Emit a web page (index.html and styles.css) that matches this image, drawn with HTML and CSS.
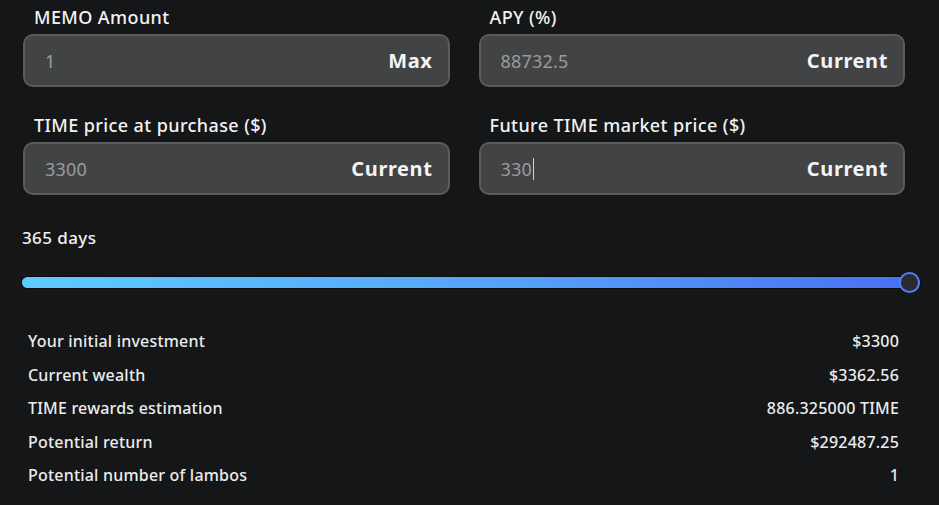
FILE: index.html
```html
<!DOCTYPE html>
<html lang="en">
<head>
    <meta charset="UTF-8">
    <title>Calculator</title>
    <link rel="stylesheet" href="styles.css">
</head>
<body>
    <div class="calc">
        <div class="fields">
            <div class="field">
                <label>MEMO Amount</label>
                <div class="input-box">
                    <span class="value">1</span>
                    <span class="action">Max</span>
                </div>
            </div>
            <div class="field">
                <label>APY (%)</label>
                <div class="input-box">
                    <span class="value">88732.5</span>
                    <span class="action">Current</span>
                </div>
            </div>
            <div class="field">
                <label>TIME price at purchase ($)</label>
                <div class="input-box">
                    <span class="value">3300</span>
                    <span class="action">Current</span>
                </div>
            </div>
            <div class="field">
                <label>Future TIME market price ($)</label>
                <div class="input-box">
                    <span class="value">330<span class="caret"></span></span>
                    <span class="action">Current</span>
                </div>
            </div>
        </div>

        <div class="days">365 days</div>
        <div class="slider">
            <div class="track"></div>
            <div class="thumb"></div>
        </div>

        <div class="results">
            <div class="row"><span>Your initial investment</span><span>$3300</span></div>
            <div class="row"><span>Current wealth</span><span>$3362.56</span></div>
            <div class="row"><span>TIME rewards estimation</span><span>886.325000 TIME</span></div>
            <div class="row"><span>Potential return</span><span>$292487.25</span></div>
            <div class="row"><span>Potential number of lambos</span><span>1</span></div>
        </div>
    </div>
</body>
</html>
```

FILE: styles.css
```css
* {
    margin: 0;
    padding: 0;
    box-sizing: border-box;
}

body {
    font-family: "Noto Sans", "Open Sans", sans-serif;
    background: #141618;
    color: #f2f2f2;
    height: 100vh;
    overflow: hidden;
}

.calc {
    padding: 6px 34px 0 23px;
}

.fields {
    display: grid;
    grid-template-columns: 1fr 1fr;
    column-gap: 29px;
    row-gap: 27px;
}

.field label {
    display: block;
    font-size: 18px;
    font-weight: 500;
    letter-spacing: 0.4px;
    padding-left: 11px;
    margin-bottom: 6px;
    line-height: 22px;
}

.input-box {
    height: 53px;
    background: #424345;
    border: 2px solid #5a5b5d;
    border-radius: 10px;
    display: flex;
    align-items: center;
    justify-content: space-between;
    padding: 0 15px 0 20px;
}

.input-box .value {
    color: #9b9b9b;
    font-size: 18px;
    letter-spacing: 0.2px;
    display: flex;
    align-items: center;
}

.caret {
    display: inline-block;
    width: 1px;
    height: 22px;
    background: #d0d0d0;
    margin-left: 1px;
}

.input-box .action {
    font-size: 20px;
    font-weight: 700;
    letter-spacing: 0.6px;
    color: #f4f4f4;
}

.days {
    font-size: 17px;
    font-weight: 500;
    letter-spacing: 0.4px;
    margin: 32px 0 0 -1px;
    line-height: 22px;
}

.slider {
    position: relative;
    height: 24px;
    margin: 21px -15px 0 -1px;
    display: flex;
    align-items: center;
}

.track {
    width: 100%;
    height: 11px;
    border-radius: 6px;
    background: linear-gradient(90deg, #5fcbff 0%, #55a2fb 55%, #4a6ff5 100%);
    box-shadow: 0 0 0 1px #0b0c0d;
}

.thumb {
    position: absolute;
    right: 0;
    top: 2px;
    width: 21px;
    height: 21px;
    border-radius: 50%;
    background: #2a2a2c;
    border: 2px solid #4f7cff;
}

.results {
    margin: 36px 6px 0 5px;
    display: flex;
    flex-direction: column;
    gap: 11px;
}

.row {
    display: flex;
    justify-content: space-between;
    font-size: 16px;
    font-weight: 500;
    letter-spacing: 0.2px;
    line-height: 22.5px;
    color: #ececec;
}
```
